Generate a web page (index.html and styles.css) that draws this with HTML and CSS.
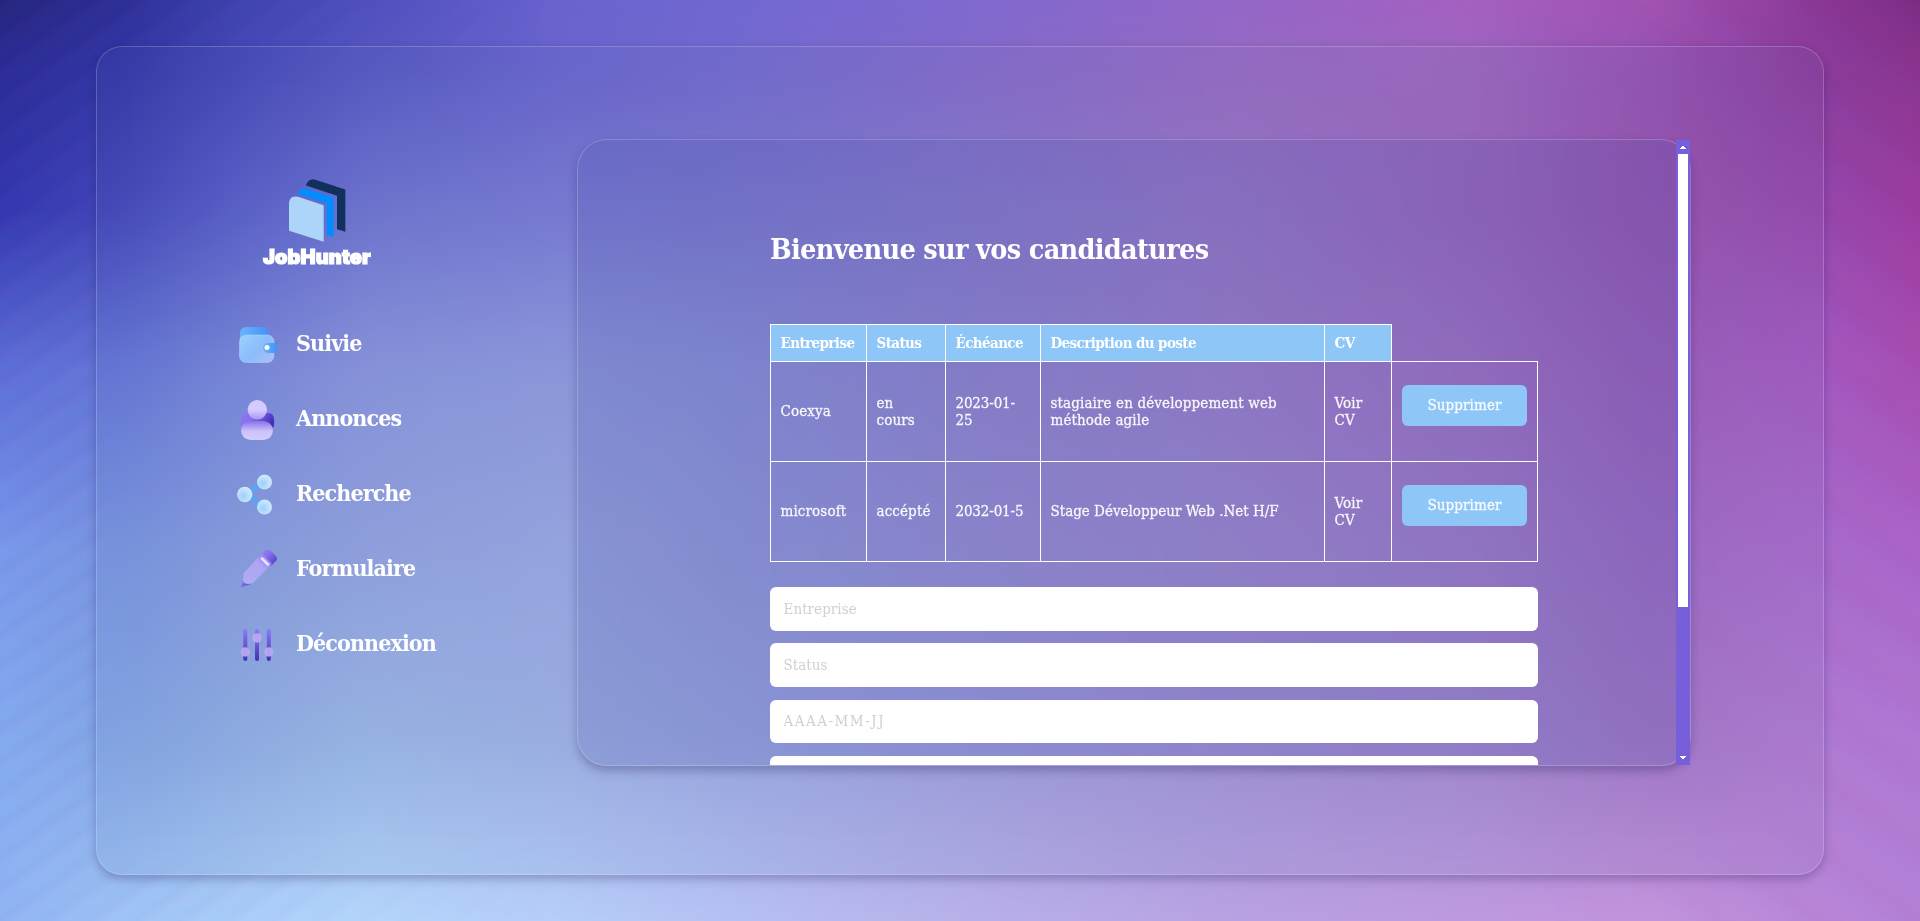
FILE: index.html
```html
<!DOCTYPE html>
<html lang="fr">
<head>
<meta charset="utf-8">
<title>JobHunter</title>
<link rel="stylesheet" href="styles.css">
</head>
<body>
<div class="mesh" aria-hidden="true"><i class="m0"></i><i class="m1"></i><i class="m2"></i><i class="m3"></i><i class="m4"></i><i class="m5"></i><i class="m6"></i></div>
<div class="rays rays-left" aria-hidden="true"></div>
<div class="rays rays-right" aria-hidden="true"></div>
<main class="dashboard">
  <aside class="sidebar">
    <div class="logo">
      <svg class="logo-mark" viewBox="126 54 330 194">
        <path fill="#12305e" d="M258 76 Q264 56 281 57 L376 88 V215 L351 207 V107 Z"/>
        <path fill="#028dff" d="M232 100 Q240 82 260 86 L341 112 V231 L320 224 V130 Z"/>
        <path fill="#acd5f9" d="M207 212 V128 Q210 104 234 110 L311 135 V245 Z"/>
      </svg>
      <span class="logo-text">JobHunter</span>
    </div>
    <nav class="menu">
      <a class="item"><svg viewBox="0 0 50 50">
        <defs><linearGradient id="w1" x2="1"><stop stop-color="#66b5fb"/><stop offset="1" stop-color="#4590f6"/></linearGradient>
        <linearGradient id="w2" x2="1" y2=".7"><stop stop-color="#9dd0fe"/><stop offset=".6" stop-color="#8abdfc"/><stop offset="1" stop-color="#a6c0f5"/></linearGradient></defs>
        <path fill="url(#w1)" d="M8 22V13q0-7 7-7h15q6 0 7 8v8z"/>
        <rect x="7.5" y="14" width="34.5" height="27.5" rx="6.500" fill="url(#w2)" stroke="#b4d6fc" stroke-opacity=".6" stroke-width=".8"/>
        <path fill="url(#w1)" d="M45 22v7q0 3-3 3h-6a5 5 0 0 1 0-10z"/><circle cx="35" cy="26.600" r="2.500" fill="#fff"/></svg><span>Suivie</span></a>
      <a class="item"><svg viewBox="0 0 50 50">
        <defs><linearGradient id="p1" x2="1" y2=".4"><stop stop-color="#8d75ff"/><stop offset=".4" stop-color="#856fee"/><stop offset="1" stop-color="#4330b8"/></linearGradient>
        <linearGradient id="p2" x2="0" y2="1"><stop stop-color="#8b70e8"/><stop offset=".55" stop-color="#cdc3fb"/><stop offset="1" stop-color="#d4ccff"/></linearGradient>
        <linearGradient id="p3" x2="0" y2="1"><stop offset=".5" stop-color="#d4ccff"/><stop offset="1" stop-color="#a996f3"/></linearGradient></defs>
        <path fill="url(#p1)" d="M14 17h24q5 1 4 13l-2 3H10q-3-15 4-16z"/>
        <rect x="9" y="25" width="32" height="19" rx="9.500" fill="url(#p2)"/><circle cx="25.300" cy="13.800" r="9.700" fill="url(#p3)"/></svg><span>Annonces</span></a>
      <a class="item"><svg viewBox="0 0 50 50">
        <defs><radialGradient id="s1" cx=".4" cy=".6"><stop stop-color="#9ad0fc"/><stop offset="1" stop-color="#cae5fd"/></radialGradient></defs>
        <path d="M32 11L14 23.500L32 36" fill="none" stroke="#57a5f9" stroke-width="5"/>
        <g fill="url(#s1)"><circle cx="12.700" cy="23.500" r="7.700"/><circle cx="32.500" cy="11" r="7.500"/><circle cx="32.500" cy="36" r="7.500"/></g></svg><span>Recherche</span></a>
      <a class="item"><svg viewBox="0 0 50 50">
        <defs><linearGradient id="c1" x2="1" y2="1"><stop offset=".3" stop-color="#8c74f4"/><stop offset="1" stop-color="#4d38be"/></linearGradient>
        <linearGradient id="c2" x1="1" x2="0" y2="1"><stop stop-color="#8771ea"/><stop offset=".4" stop-color="#aba5f3"/><stop offset="1" stop-color="#afacf3"/></linearGradient></defs>
        <path fill="url(#c1)" d="M29 9l4-4q3-2.500 6 0l5 5q2 3 0 5l-5 5z"/>
        <path fill="url(#c1)" d="M12 32L9 41l10-3z"/>
        <path fill="url(#c2)" d="M30 7L12 27q-2 7 0 9.500t9 .5L40 18z"/>
        <path d="M30 12.500l6 6" stroke="#e9e2ff" stroke-width="2.500" stroke-linecap="round"/></svg><span>Formulaire</span></a>
      <a class="item"><svg viewBox="0 0 50 50">
        <defs><linearGradient id="d1" x2="0" y2="1"><stop stop-color="#9079f8"/><stop offset="1" stop-color="#4430ae"/></linearGradient></defs>
        <g fill="url(#d1)"><rect x="11.300" y="8" width="4" height="32" rx="2"/><rect x="23" y="8" width="4" height="32" rx="2"/><rect x="34.800" y="8" width="4" height="32" rx="2"/></g>
        <g fill="#baa9f3" fill-opacity=".93"><circle cx="13.300" cy="31" r="4.700"/><circle cx="25" cy="17" r="4.800"/><circle cx="36.800" cy="31" r="4.700"/></g></svg><span>Déconnexion</span></a>
    </nav>
  </aside>
  <section class="card">
    <div class="card-view">
      <h1>Bienvenue sur vos candidatures</h1>
      <table>
        <colgroup><col class="c-ent"><col class="c-sta"><col class="c-ech"><col class="c-des"><col class="c-cv"><col class="c-act"></colgroup>
        <tr class="head"><th>Entreprise</th><th>Status</th><th>Échéance</th><th>Description du poste</th><th>CV</th></tr>
        <tr><td>Coexya</td><td>en<br>cours</td><td>2023-01-<br>25</td><td>stagiaire en développement web<br>méthode agile</td><td>Voir<br>CV</td><td><button>Supprimer</button></td></tr>
        <tr><td>microsoft</td><td>accépté</td><td>2032-01-5</td><td class="snug">Stage Développeur Web .Net H/F</td><td>Voir<br>CV</td><td><button>Supprimer</button></td></tr>
      </table>
      <form>
        <input placeholder="Entreprise">
        <input placeholder="Status">
        <input class="date" placeholder="AAAA-MM-JJ">
        <input>
      </form>
    </div>
    <div class="scrollbar" aria-hidden="true">
      <svg viewBox="0 0 14 14"><path fill="#fff" d="M4 9V8h1V7h1V6h2v1h1v1h1v1z"/></svg>
      <div class="thumb"></div>
      <svg viewBox="0 0 14 14"><path fill="#fff" d="M4 5v1h1v1h1v1h2V7h1V6h1V5z"/></svg>
    </div>
  </section>
</main>
</body>
</html>
```
FILE: styles.css
```css
* { box-sizing: border-box; }
body {
  margin: 0;
  width: 1920px;
  height: 921px;
  overflow: hidden;
  display: flex;
  align-items: center;
  justify-content: center;
  position: relative;
  color: #fff;
  font-family: "DejaVu Serif Condensed", "DejaVu Serif", serif;
  font-stretch: condensed;
}

/* Background mesh: horizontal colour rows faded into one another */
.mesh, .mesh i, .rays { position: absolute; inset: 0; }
.mesh i { --from: 0%; --to: 0%; -webkit-mask-image: linear-gradient(to bottom, transparent var(--from), #000 var(--to)); mask-image: linear-gradient(to bottom, transparent var(--from), #000 var(--to)); }
.mesh .m0 { -webkit-mask-image: none; mask-image: none; background: linear-gradient(90deg, #25257a 0%, #2e2f95 6.4%, #4145b0 12.8%, #5050be 19.1%, #6963cf 28.7%, #7268d2 38.3%, #8069d0 51%, #9367c8 63.8%, #a660c0 76.5%, #a254b4 86.1%, #8b3a98 94.4%, #7d2d84 100%); }
.mesh .m1 { --from: 0%; --to: 8%; background: linear-gradient(90deg, #2c2c96 0%, #3438a6 6.4%, #484ab8 12.8%, #5859c2 19.1%, #6964cc 28.7%, #726ace 38.3%, #846ac8 51%, #956ac2 63.8%, #9a66bf 76.5%, #9452b2 86.1%, #8a3e9e 94.4%, #8b3690 100%); }
.mesh .m2 { --from: 8%; --to: 22.6%; background: linear-gradient(90deg, #3437ae 0%, #4447b8 6.4%, #5b60c9 12.8%, #6f74d0 19.1%, #7878d4 28.7%, #7c77d0 38.3%, #8878cc 51%, #9875c6 63.8%, #9b64bc 76.5%, #9654b0 86.1%, #964aae 94.4%, #9c3da2 100%); }
.mesh .m3 { --from: 22.6%; --to: 40%; background: linear-gradient(90deg, #5e70d8 0%, #6678d6 6.4%, #7b89da 12.8%, #8b95dc 19.1%, #8e98dc 28.7%, #8c90d8 38.3%, #9485d0 51%, #9f7fcc 63.8%, #a36fc4 76.5%, #9c5eba 86.1%, #a45cc2 94.4%, #a84fb2 100%); }
.mesh .m4 { --from: 40%; --to: 60%; background: linear-gradient(90deg, #7c9cec 0%, #7c98e0 6.4%, #8a9fde 12.8%, #93a3e0 19.1%, #98a6e2 28.7%, #9499dc 38.3%, #9a8fd6 51%, #a288d0 63.8%, #a27cca 76.5%, #a06bc4 86.1%, #a86dcc 94.4%, #ab67cb 100%); }
.mesh .m5 { --from: 60%; --to: 80%; background: linear-gradient(90deg, #86aef0 0%, #86a8e4 6.4%, #93b0e4 12.8%, #9bb8e6 19.1%, #9eb0e4 28.7%, #9aa6e2 38.3%, #9c9adc 51%, #a08fd4 63.8%, #a286ce 76.5%, #a477c8 86.1%, #b07cd4 94.4%, #b07ad4 100%); }
.mesh .m6 { --from: 80%; --to: 100%; background: linear-gradient(90deg, #93b8f4 0%, #a3c8f7 6.4%, #aed2f9 12.8%, #b6d8fc 19.1%, #b6cef9 28.7%, #b6c0f2 38.3%, #b8b0e8 51%, #b8a2e2 63.8%, #be9ae0 76.5%, #c396de 86.1%, #b98ada 94.4%, #b484da 100%); }
.rays-left { right: auto; width: 560px; background: repeating-linear-gradient(145deg, rgba(50,30,190,.05) 0, rgba(150,70,230,.035) 9px, rgba(50,110,230,.04) 17px, rgba(50,30,190,.05) 26px); -webkit-mask-image: linear-gradient(90deg, #000 30%, transparent); mask-image: linear-gradient(90deg, #000 30%, transparent); }
.rays-right { left: auto; width: 420px; background: repeating-linear-gradient(215deg, rgba(150,20,130,.05) 0, rgba(130,70,220,.03) 24px, rgba(190,60,150,.03) 38px, rgba(150,20,130,.05) 58px); -webkit-mask-image: linear-gradient(270deg, #000 30%, transparent); mask-image: linear-gradient(270deg, #000 30%, transparent); }

.dashboard {
  position: relative;
  width: 1728px;
  height: 829px;
  display: grid;
  grid-template-columns: 480px 1114px;
  align-items: start;
  padding-top: 92px;
  border: 1px solid rgba(255,255,255,.2);
  border-radius: 26px;
  background: rgba(110,130,165,.06);
  -webkit-backdrop-filter: blur(16px);
  backdrop-filter: blur(16px);
  box-shadow: 0 4px 10px rgba(30,20,80,.28);
}

.sidebar { padding: 39px 0 0 135px; }
.logo { width: 110px; margin-left: 30px; }
.logo-mark { display: block; width: 110px; height: 65px; }
.logo-text {
  display: block;
  margin: 2px 0 0 1px;
  font: 900 20px/24px Inter, "Open Sans", sans-serif;
  letter-spacing: .1px;
  white-space: nowrap;
  -webkit-text-stroke: 1.2px #fff;
  stroke-linejoin: round;
}
.menu { display: flex; flex-direction: column; gap: 25px; margin-top: 52px; }
.item { display: flex; align-items: center; gap: 14px; height: 50px; }
.item svg { width: 50px; height: 50px; flex: none; }
.item span { font-size: 23px; font-weight: bold; line-height: 30px; letter-spacing: -.9px; padding-bottom: 6px; white-space: nowrap; }

.card {
  position: relative;
  height: 627px;
  border: 1px solid rgba(255,255,255,.2);
  border-radius: 30px;
  background: rgba(80,85,165,.18);
  box-shadow: 0 5px 10px rgba(30,20,80,.28);
}
.card-view { height: 625px; overflow: hidden; padding: 89px 138px 0 192px; border-radius: 29px 0 0 29px; }
h1 { margin: 0; font-size: 28.5px; line-height: 40px; letter-spacing: -.68px; white-space: nowrap; }

table {
  width: 768px;
  margin-top: 55px;
  border-collapse: collapse;
  table-layout: fixed;
  font-size: 15px;
  line-height: 17px;
  letter-spacing: .12px;
  color: rgba(255,255,255,.93);
}
.c-ent { width: 96px; } .c-sta { width: 79px; } .c-ech { width: 95px; }
.c-des { width: 284px; } .c-cv { width: 67px; } .c-act { width: 146px; }
tr { height: 100px; }
.head { height: 37px; }
th, td { padding: 0 9.500px; text-align: left; border: 1px solid #fff; white-space: nowrap; }
td { -webkit-text-stroke: .3px rgba(255,255,255,.8); }
th { background: #8ec7f7; letter-spacing: -.6px; color: #fff; }
td:nth-child(3) { letter-spacing: -.15px; }
.snug { letter-spacing: 0; }
button {
  display: block;
  width: 125px;
  height: 41px;
  margin: 0 0 13px .5px;
  padding: 0;
  border: 0;
  border-radius: 6px;
  background: #8ec7f7;
  color: rgba(255,255,255,.95);
  font: inherit;
  letter-spacing: .1px;
}
form { display: flex; flex-direction: column; gap: 12.500px; margin-top: 25px; }
input {
  width: 768px;
  height: 43.800px;
  flex: none;
  padding: 0 13.500px;
  border: 0;
  border-radius: 6px;
  background: #fff;
  font: 15px "DejaVu Serif Condensed", "DejaVu Serif", serif;
  font-stretch: condensed;
  letter-spacing: .05px;
}
input::placeholder { color: #d0d0d0; opacity: 1; }
input.date { letter-spacing: 1.500px; }

.scrollbar {
  position: absolute;
  top: 0;
  right: 0;
  width: 14px;
  height: 625px;
  display: flex;
  flex-direction: column;
  background: #765fd8;
}
.scrollbar svg { display: block; width: 14px; height: 14px; }
.thumb { width: 10px; height: 453px; margin: 0 auto auto; background: #fff; }
```
